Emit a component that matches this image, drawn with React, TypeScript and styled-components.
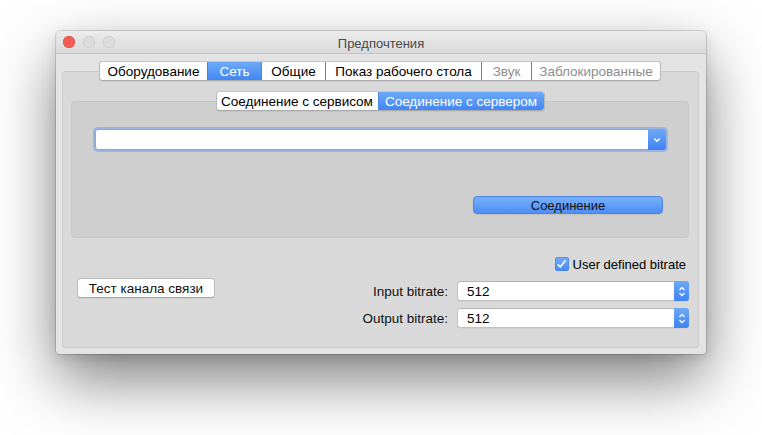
import React from 'react';
import styled, { createGlobalStyle, css } from 'styled-components';

const Global = createGlobalStyle`
  html, body { margin: 0; padding: 0; background: #ffffff; }
  body {
    font-family: "Liberation Sans", Arial, sans-serif;
    font-size: 13px;
    color: #000;
  }
  * { box-sizing: border-box; }
`;

const Page = styled.div`
  width: 762px;
  height: 435px;
  padding: 31px 0 0 56px;
  overflow: hidden;
`;

const Window = styled.div`
  width: 650px;
  height: 323px;
  display: flex;
  flex-direction: column;
  border-radius: 5px 5px 4px 4px;
  background: #e3e3e3;
  box-shadow: 0 0 0 1px rgba(0, 0, 0, 0.13), 0 26px 62px rgba(0, 0, 0, 0.5),
    0 4px 12px rgba(0, 0, 0, 0.12);
  overflow: hidden;
`;

const TitleBar = styled.div`
  flex: none;
  height: 23px;
  display: grid;
  grid-template-columns: 1fr auto 1fr;
  align-items: center;
  padding: 0 7px;
  background: linear-gradient(#ececec, #d9d9d9);
  border-bottom: 1px solid #c4c4c4;
`;

const Lights = styled.div`
  display: flex;
  gap: 8px;
  align-items: center;
`;

const Light = styled.span<{ $color: string; $border: string }>`
  width: 12px;
  height: 12px;
  border-radius: 50%;
  background: ${(p) => p.$color};
  box-shadow: inset 0 0 0 0.5px ${(p) => p.$border};
`;

const Title = styled.div`
  color: #4a4a4a;
  font-size: 13px;
  padding-top: 2px;
`;

const Body = styled.div`
  flex: 1;
  display: flex;
  flex-direction: column;
  padding: 7px 7px 6px 5px;
  min-height: 0;
`;

const TabView = styled.div<{ $grow?: boolean }>`
  display: flex;
  flex-direction: column;
  ${(p) => p.$grow && css`flex: 1; min-height: 0;`}
`;

const Segmented = styled.div`
  position: relative;
  z-index: 1;
  align-self: center;
  display: flex;
  height: 20px;
  background: #fff;
  border: 1px solid #b9b9b9;
  border-top-color: #c6c6c6;
  border-bottom-color: #a9a9a9;
  border-radius: 4px;
  overflow: hidden;
  box-shadow: 0 1px 1px rgba(0, 0, 0, 0.06);
`;

const Segment = styled.div<{ $w: number; $active?: boolean; $disabled?: boolean }>`
  flex: none;
  width: ${(p) => p.$w}px;
  display: flex;
  align-items: center;
  justify-content: center;
  white-space: nowrap;
  font-size: 13.5px;
  color: ${(p) => (p.$disabled ? '#8d8d8d' : '#000')};
  & + & {
    border-left: 1px solid #d4d4d4;
  }
  ${(p) =>
    p.$active &&
    css`
      color: #fff;
      background: linear-gradient(#6eaaf9, #4386f4);
      & + & { border-left-color: #4a86e6; }
    `}
`;

const OuterBox = styled.div`
  flex: 1;
  margin-top: -10px;
  margin-left: 1px;
  display: flex;
  flex-direction: column;
  padding: 19px 9px 0 8px;
  background: #d9d9d9;
  border: 1px solid #cdcdcd;
  border-top-color: #c9c9c9;
  border-radius: 4px;
  min-height: 0;
`;

const InnerBox = styled.div`
  height: 137px;
  margin-top: -10px;
  display: flex;
  flex-direction: column;
  padding: 27px 22px 0 23px;
  background: #cfcfcf;
  border: 1px solid #c7c7c7;
  border-radius: 4px;
`;

const Combo = styled.div`
  height: 21px;
  display: flex;
  background: #fff;
  border: 1px solid #7fa6ee;
  border-radius: 3px;
  box-shadow: 0 0 0 2px rgba(112, 157, 240, 0.55);
`;

const ComboField = styled.div`
  flex: 1;
`;

const BlueKnob = styled.div<{ $w: number }>`
  flex: none;
  width: ${(p) => p.$w}px;
  display: flex;
  align-items: center;
  justify-content: center;
  background: linear-gradient(#6ea9f9, #3f82f3);
  border-radius: 0 3px 3px 0;
  margin: -1px -1px -1px 0;
`;

const PrimaryButton = styled.button`
  align-self: flex-end;
  margin-top: 46px;
  margin-right: 3px;
  width: 190px;
  height: 18px;
  padding: 0;
  font-family: inherit;
  font-size: 13px;
  color: #111;
  background: linear-gradient(#78b0f9, #4e8ef5);
  border: 1px solid #4b85e8;
  border-radius: 4px;
  box-shadow: 0 1px 1px rgba(0, 0, 0, 0.08);
`;

const Bottom = styled.div`
  display: flex;
  justify-content: space-between;
  align-items: flex-start;
  padding: 19px 0 0 6px;
`;

const Button = styled.button`
  margin-top: 21px;
  width: 138px;
  height: 20px;
  padding: 0;
  font-family: inherit;
  font-size: 13.5px;
  color: #111;
  background: #fff;
  border: 1px solid #bcbcbc;
  border-bottom-color: #a8a8a8;
  border-radius: 4px;
  box-shadow: 0 1px 1px rgba(0, 0, 0, 0.05);
`;

const RightCol = styled.div`
  display: flex;
  flex-direction: column;
  align-items: flex-end;
  margin-right: 0;
`;

const CheckRow = styled.label`
  display: flex;
  align-items: center;
  gap: 4px;
  height: 14px;
  margin-right: 3px;
  font-size: 13px;
`;

const CheckBox = styled.span`
  width: 14px;
  height: 14px;
  display: flex;
  align-items: center;
  justify-content: center;
  border-radius: 3px;
  background: linear-gradient(#74acf9, #468af5);
  box-shadow: inset 0 0 0 0.5px #3f7ee6;
`;

const Form = styled.div`
  margin-top: 10px;
  display: grid;
  grid-template-columns: auto 232px;
  column-gap: 9px;
  row-gap: 7px;
  align-items: center;
`;

const Label = styled.div`
  text-align: right;
  font-size: 13.5px;
  color: #111;
`;

const SpinBox = styled.div`
  height: 20px;
  display: flex;
  background: #fff;
  border: 1px solid #c2c2c2;
  border-top-color: #b4b4b4;
  border-radius: 4px;
  box-shadow: 0 1px 0 rgba(0, 0, 0, 0.04);
`;

const SpinValue = styled.div`
  flex: 1;
  display: flex;
  align-items: center;
  padding-left: 9px;
  font-size: 13.5px;
`;

const Chevron = () => (
  <svg width="8" height="6" viewBox="0 0 8 6">
    <path d="M1.2 1.6 L4 4.2 L6.8 1.6" fill="none" stroke="#fff" strokeWidth="1.4" />
  </svg>
);

const UpDown = () => (
  <svg width="8" height="13" viewBox="0 0 8 13">
    <path d="M1.5 5 L4 2.4 L6.5 5" fill="none" stroke="#fff" strokeWidth="1.3" />
    <path d="M1.5 8 L4 10.6 L6.5 8" fill="none" stroke="#fff" strokeWidth="1.3" />
  </svg>
);

const Check = () => (
  <svg width="11" height="10" viewBox="0 0 11 10">
    <path d="M1.6 5.2 L4.2 8 L9.4 1.4" fill="none" stroke="#fff" strokeWidth="1.6" />
  </svg>
);

const mainTabs = [
  { label: 'Оборудование', w: 107 },
  { label: 'Сеть', w: 54, active: true },
  { label: 'Общие', w: 64 },
  { label: 'Показ рабочего стола', w: 156 },
  { label: 'Звук', w: 50, disabled: true },
  { label: 'Заблокированные', w: 129, disabled: true },
];

const subTabs = [
  { label: 'Соединение с сервисом', w: 161 },
  { label: 'Соединение с сервером', w: 166, active: true },
];

const fields = [
  { label: 'Input bitrate:', value: '512' },
  { label: 'Output bitrate:', value: '512' },
];

export default function App() {
  return (
    <>
      <Global />
      <Page>
        <Window>
          <TitleBar>
            <Lights>
              <Light $color="#f25d55" $border="#d9473f" />
              <Light $color="#dcdcdc" $border="#c4c4c4" />
              <Light $color="#dcdcdc" $border="#c4c4c4" />
            </Lights>
            <Title>Предпочтения</Title>
            <div />
          </TitleBar>
          <Body>
            <TabView $grow>
              <Segmented>
                {mainTabs.map((t) => (
                  <Segment key={t.label} $w={t.w} $active={t.active} $disabled={t.disabled}>
                    {t.label}
                  </Segment>
                ))}
              </Segmented>
              <OuterBox>
                <TabView>
                  <Segmented>
                    {subTabs.map((t) => (
                      <Segment key={t.label} $w={t.w} $active={t.active}>
                        {t.label}
                      </Segment>
                    ))}
                  </Segmented>
                  <InnerBox>
                    <Combo>
                      <ComboField />
                      <BlueKnob $w={18}>
                        <Chevron />
                      </BlueKnob>
                    </Combo>
                    <PrimaryButton>Соединение</PrimaryButton>
                  </InnerBox>
                </TabView>
                <Bottom>
                  <Button>Тест канала связи</Button>
                  <RightCol>
                    <CheckRow>
                      <CheckBox>
                        <Check />
                      </CheckBox>
                      User defined bitrate
                    </CheckRow>
                    <Form>
                      {fields.map((f) => (
                        <React.Fragment key={f.label}>
                          <Label>{f.label}</Label>
                          <SpinBox>
                            <SpinValue>{f.value}</SpinValue>
                            <BlueKnob $w={15}>
                              <UpDown />
                            </BlueKnob>
                          </SpinBox>
                        </React.Fragment>
                      ))}
                    </Form>
                  </RightCol>
                </Bottom>
              </OuterBox>
            </TabView>
          </Body>
        </Window>
      </Page>
    </>
  );
}
